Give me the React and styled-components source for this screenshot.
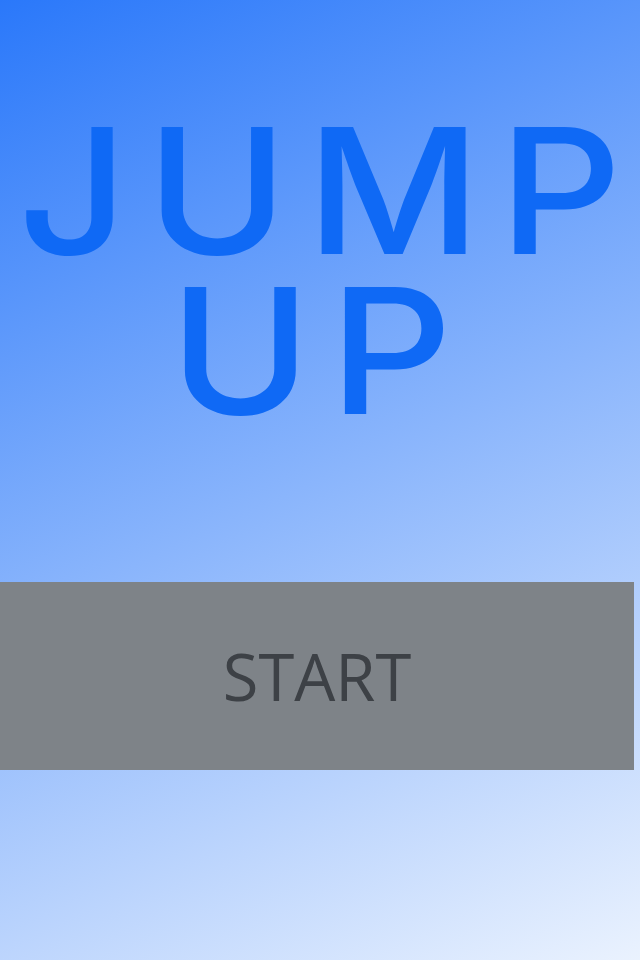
import styled, { createGlobalStyle } from "styled-components";

const GlobalStyle = createGlobalStyle`
  html, body {
    margin: 0;
    padding: 0;
  }
  body {
    font-family: "Open Sans", "Liberation Sans", sans-serif;
  }
`;

const Screen = styled.main`
  width: 640px;
  height: 960px;
  display: flex;
  flex-direction: column;
  background: linear-gradient(155deg, #2a78fa 0%, #eaf2fe 100%);
  overflow: hidden;
`;

// the logo type is set wide, so it gets a horizontal stretch
const Title = styled.h1`
  margin: 0;
  padding-top: 111px;
  font-family: Inter, "Open Sans", sans-serif;
  font-weight: 500;
  font-size: 174px;
  line-height: 160px;
  letter-spacing: 0.095em;
  text-indent: 0.095em;
  text-align: center;
  color: #0f69f5;
  transform: scaleX(1.1);
`;

const StartButton = styled.button`
  margin-top: 151px;
  width: 634px;
  height: 188px;
  border: none;
  padding: 0;
  background: #7e8388;
  color: #3d4146;
  font-family: "Open Sans", "Liberation Sans", sans-serif;
  font-size: 65px;
  cursor: pointer;
`;

const App = () => {
  return (
    <>
      <GlobalStyle />
      <Screen>
        <Title>
          JUMP
          <br />
          UP
        </Title>
        <StartButton>START</StartButton>
      </Screen>
    </>
  );
};

export default App;
